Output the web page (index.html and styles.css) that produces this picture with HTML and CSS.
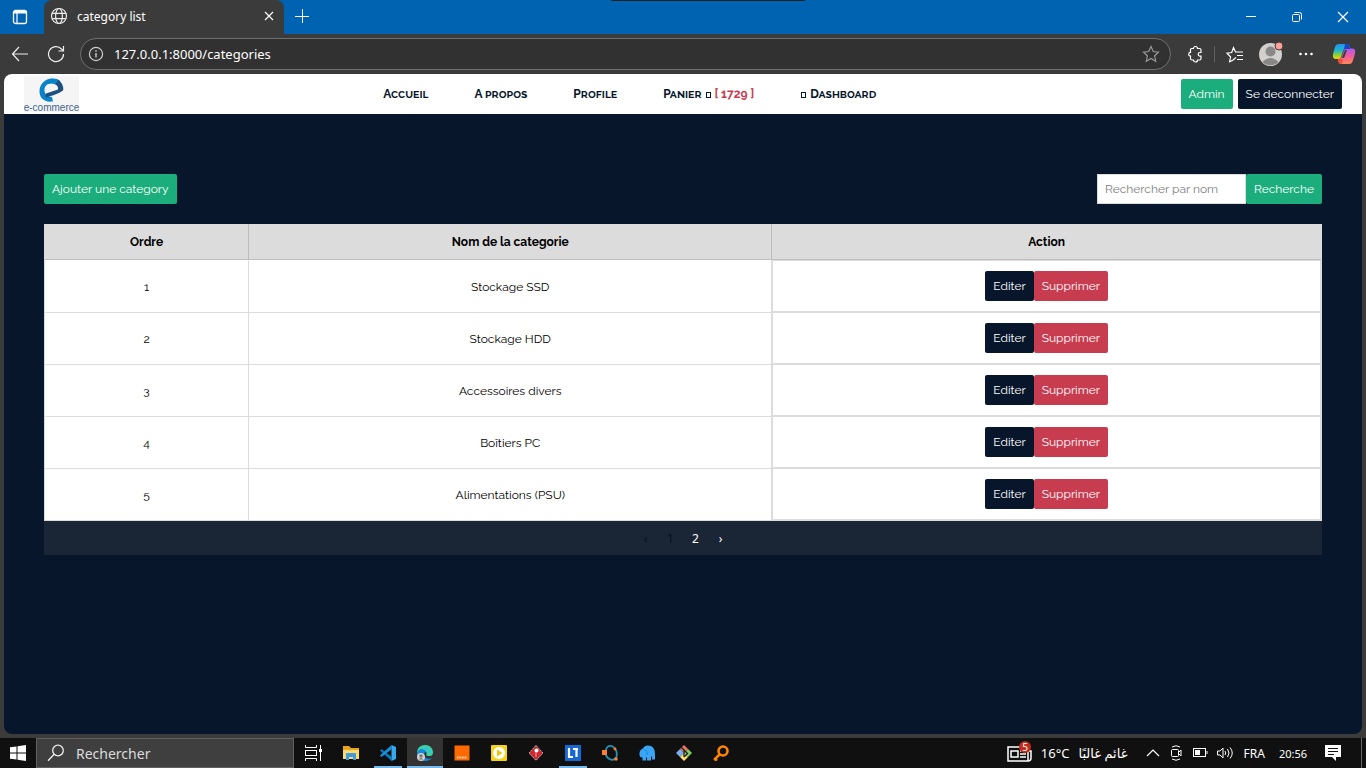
FILE: index.html
```html
<!DOCTYPE html>
<html lang="fr">
<head>
<meta charset="utf-8">
<meta name="viewport" content="width=device-width, initial-scale=1">
<title>category list</title>
<link rel="stylesheet" href="styles.css">
</head>
<body>
<header class="titlebar">
  <button class="tab-actions" aria-label="Tab actions">
    <svg width="16" height="16" viewBox="0 0 16 16" fill="none" stroke="#fff"><rect x="1.5" y="1.5" width="13" height="13" rx="2" stroke-width="1.3"/><path d="M2 3h12" stroke-width="3"/><path d="M5 4v10" stroke-width="1.2"/></svg>
  </button>
  <div class="tab">
    <svg width="18" height="18" viewBox="0 0 18 18" fill="none" stroke="#eee" stroke-width="1.2"><circle cx="9" cy="9" r="7.5"/><ellipse cx="9" cy="9" rx="3.4" ry="7.5"/><path d="M2.2 6.3h13.6M2.2 11.7h13.6"/></svg>
    <span class="tab-title">category list</span>
    <button class="tab-close" aria-label="Close tab"><svg width="10" height="10" viewBox="0 0 10 10" stroke="#fff" stroke-width="1.2"><path d="M1 1l8 8M9 1l-8 8"/></svg></button>
  </div>
  <button class="new-tab" aria-label="New tab"><svg width="14" height="14" viewBox="0 0 14 14" stroke="#fff"><path d="M7.5 0v14M0 7.5h14"/></svg></button>
  <div class="drag-handle"></div>
  <div class="window-buttons">
    <button aria-label="Minimize"><svg width="12" height="12" viewBox="0 0 12 12" stroke="#fff"><path d="M1 5.5h10"/></svg></button>
    <button aria-label="Restore"><svg width="12" height="12" viewBox="0 0 12 12" stroke="#fff" fill="none"><rect x="1.5" y="3.5" width="7" height="7" rx="1"/><path d="M3.5 1.5h5q2 0 2 2v5"/></svg></button>
    <button aria-label="Close window"><svg width="12" height="12" viewBox="0 0 12 12" stroke="#fff" stroke-width="1.2"><path d="M1 1l10 10M11 1l-10 10"/></svg></button>
  </div>
</header>

<div class="toolbar">
  <button class="nav-button" aria-label="Back"><svg width="18" height="16" viewBox="0 0 18 16" fill="none" stroke="#eee" stroke-width="1.2"><path d="M8 1L1.500 8L8 15M1.500 8H17"/></svg></button>
  <button class="nav-button" aria-label="Reload"><svg width="18" height="18" viewBox="0 0 18 18" fill="none" stroke="#eee" stroke-width="1.2"><path d="M16.500 9a7.500 7.500 0 1 1-2-5l2 2M16.500 1v5h-5"/></svg></button>
  <div class="address">
    <svg width="16" height="16" viewBox="0 0 16 16" fill="none" stroke="#ccc" stroke-width="1.2"><circle cx="8" cy="8" r="6.600"/><path d="M8 7v4.500M8 4.300v1.500" stroke-width="1.400"/></svg>
    <input class="address-input" aria-label="Address" value="127.0.0.1:8000/categories">
    <button aria-label="Add to favorites"><svg width="18" height="18" viewBox="0 0 18 18" fill="none" stroke="#999" stroke-width="1.2"><path d="M9 1.500l2.300 5 5.200.6-3.900 3.700 1.100 5.400L9 13.500l-4.700 2.700 1.100-5.400L1.500 7.100l5.200-.6z"/></svg></button>
  </div>
  <button class="ext" aria-label="Extensions"><svg width="16" height="18" viewBox="0 0 16 18" fill="none" stroke="#fff" stroke-width="1.2"><path d="M3.500 4.500q0-1 1-1H6.500a2 2 0 0 1 4 0H12.500q1.500 0 1.500 1.500V7.500h-1a1.800 1.800 0 0 0 0 3.600h1V13.500q0 1.500-1.500 1.500H10.500a2 2 0 0 1-4 0H5q-1.500 0-1.500-1.500V11a1.800 1.800 0 0 1 0-3.600z"/></svg></button>
  <span class="divider"></span>
  <button aria-label="Favorites"><svg width="18" height="18" viewBox="0 0 18 18" fill="none" stroke="#fff" stroke-width="1.2"><path d="M10 12.500l-3.200 2.700-3.200 1.500 1-4.700L1 8.200l4.700-.7L7.500 2.500l2 4.500H17M11 10.500h6M11 14.500h6"/></svg></button>
  <button class="profile" aria-label="Profile"><svg width="26" height="26" viewBox="0 0 26 26"><circle cx="12.500" cy="13.500" r="11.500" fill="#d2d0ce"/><circle cx="12.500" cy="10.500" r="5" fill="#8a8886"/><path d="M4.500 21q8-8 16 0a11.500 11.500 0 0 1-16 0z" fill="#8a8886"/><circle cx="21" cy="5" r="4" fill="#ff9f98" stroke="#3b3b3b"/></svg></button>
  <button aria-label="Settings"><svg width="16" height="6" viewBox="0 0 16 6" fill="#fff"><circle cx="2.500" cy="3" r="1.300"/><circle cx="8" cy="3" r="1.300"/><circle cx="13.500" cy="3" r="1.300"/></svg></button>
  <button class="copilot" aria-label="Copilot"><svg width="24" height="22" viewBox="0 0 24 22">
    <defs>
      <linearGradient id="cool" x1="0" y1="0" x2="0" y2="1"><stop offset="0" stop-color="#2494ef"/><stop offset=".4" stop-color="#19b5d5"/><stop offset=".75" stop-color="#8fd32f"/><stop offset="1" stop-color="#ffd000"/></linearGradient>
      <linearGradient id="warm" x1="0" y1="0" x2="0" y2="1"><stop offset="0" stop-color="#a85cf5"/><stop offset=".5" stop-color="#f25b9c"/><stop offset="1" stop-color="#ff8a55"/></linearGradient>
    </defs>
    <path d="M7 1h8q2 0 2.500 2L18 6h-5q-1.500 0-2 2l-2 6q-.6 2-2.500 2H4q-4 0-3-5l2-7q1-3 4-3z" fill="url(#cool)"/>
    <path d="M17 21H9q-2 0-2.500-2L6 16q3 0 3.700-2l2.400-7q.5-1.500 2-1.500H20q4 0 3 5l-2 7q-1 3.500-4 3.500z" fill="url(#warm)"/>
    <path d="M13 1h2q2 0 2.500 2L18 6h-6z" fill="#1746c8"/><path d="M6 16h5l-1 5q-2.500 0-3.500-2z" fill="#f44b42"/>
    <path d="M13 7h2l-3 8h-2z" fill="#3b3b3b"/></svg></button>
</div>

<main class="page">
  <nav class="site-nav">
    <a class="logo" href="#" aria-label="e-commerce">
      <svg width="55" height="36" viewBox="0 0 55 36"><rect width="55" height="36" fill="#f5f5f5"/>
        <path d="M29 25.300C21 27 15 22 15.500 14.500C16 7 22 2.500 28.500 2.500L30 7.500C25 6.500 21 9 20.500 13C20 18 23 20.500 28 21z" fill="#0b83cb"/>
        <path d="M25 3Q32 1.500 36.500 5L32.500 9Q29 6.500 24 8z" fill="#0b83cb"/>
        <path d="M34 4Q39.500 7 39.300 14Q38 16 30 19L22 21.500Q20.500 19 22 17.500L34 13.500Q34.500 10 31.500 8.500z" fill="#214f80"/>
        <text x="27.500" y="35" text-anchor="middle" class="logo-text">e-commerce</text></svg>
    </a>
    <div class="nav-links">
      <a href="#">Accueil</a>
      <a href="#">A propos</a>
      <a href="#">Profile</a>
      <a href="#">Panier <i class="glyph-box"></i> <span class="total">[ 1729 ]</span></a>
      <a href="#"><i class="glyph-box"></i> Dashboard</a>
    </div>
    <div class="account">
      <button class="btn btn-green">Admin</button>
      <button class="btn btn-navy">Se deconnecter</button>
    </div>
  </nav>

  <section class="content">
    <div class="actions-bar">
      <a class="btn btn-green" href="#">Ajouter une category</a>
      <form class="search">
        <input class="search-input" type="text" placeholder="Rechercher par nom" aria-label="Rechercher par nom">
        <button class="btn btn-green" type="button">Recherche</button>
      </form>
    </div>
    <table class="categories">
      <thead><tr><th class="col-order">Ordre</th><th class="col-name">Nom de la categorie</th><th>Action</th></tr></thead>
      <tbody>
        <tr><td>1</td><td>Stockage SSD</td><td class="action-cell"><div class="row-actions"><button class="btn btn-navy">Editer</button><button class="btn btn-red">Supprimer</button></div></td></tr>
        <tr><td>2</td><td>Stockage HDD</td><td class="action-cell"><div class="row-actions"><button class="btn btn-navy">Editer</button><button class="btn btn-red">Supprimer</button></div></td></tr>
        <tr><td>3</td><td>Accessoires divers</td><td class="action-cell"><div class="row-actions"><button class="btn btn-navy">Editer</button><button class="btn btn-red">Supprimer</button></div></td></tr>
        <tr><td>4</td><td>Boîtiers PC</td><td class="action-cell"><div class="row-actions"><button class="btn btn-navy">Editer</button><button class="btn btn-red">Supprimer</button></div></td></tr>
        <tr><td>5</td><td>Alimentations (PSU)</td><td class="action-cell"><div class="row-actions"><button class="btn btn-navy">Editer</button><button class="btn btn-red">Supprimer</button></div></td></tr>
      </tbody>
    </table>
    <div class="pagination">
      <span class="disabled">‹</span><span class="disabled">1</span><a href="#">2</a><a href="#">›</a>
    </div>
  </section>
</main>

<footer class="taskbar">
  <button class="start" aria-label="Start"><svg width="16" height="16" viewBox="0 0 16 16" fill="#fff"><path d="M0 2.300L6.500 1.400V7.500H0zM7.500 1.200L16 0V7.500H7.500zM0 8.500H6.500V14.600L0 13.700zM7.500 8.500H16V16L7.500 14.800z"/></svg></button>
  <label class="task-search">
    <svg width="18" height="18" viewBox="0 0 18 18" fill="none" stroke="#eee" stroke-width="1.300"><circle cx="11" cy="6.500" r="5.300"/><path d="M7.200 10.300L1 16.800"/></svg>
    <input type="text" placeholder="Rechercher" aria-label="Rechercher">
  </label>
  <div class="apps">
    <button aria-label="Task view"><svg width="18" height="16" viewBox="0 0 18 16" fill="none" stroke="#fff"><path d="M.5 0v2.500h11V0M.5 16v-2.500h11V16M15.500 0v16"/><rect x=".5" y="5.500" width="11" height="5"/><rect x="14" y="4" width="3" height="3" fill="#fff" stroke="none"/></svg></button>
    <button aria-label="File explorer"><svg width="16" height="16" viewBox="0 0 16 16"><path d="M0 1h6l2 2h8v11H0z" fill="#e8a41c"/><path d="M0 5h16v9H0z" fill="#ffd96b"/><path d="M3 8h10v7h-3v-3H6v3H3z" fill="#3e9be0"/></svg></button>
    <button class="open" aria-label="Visual Studio Code"><svg width="16" height="16" viewBox="0 0 16 16"><path d="M11.500 0v16L0 5.500 1.500 4l10 7.700z" fill="#0879bf"/><path d="M11.500 0v4.300L1.500 12 0 10.500z" fill="#1692da"/><path d="M11.500 0L16 2v12l-4.500 2z" fill="#35a9ef"/></svg></button>
    <button class="open active" aria-label="Microsoft Edge"><svg width="18" height="18" viewBox="0 0 18 18"><path d="M1 9C1 3.500 5 1 9.500 1C14.500 1 17 5 17 8.500c0 3-2.500 4-5 3.500-3-.6-1-2-1.500-3.500C9 4.500 3 5 1 9z" fill="#3bd0a5"/><path d="M1 9C2 5 8 3 10.500 8 7 8 7 13 11 14.500c2 .7 4 0 5.500-1C13 19 1 18.500 1 9z" fill="#148bd8"/><path d="M6 5Q13 1 16 9l-5-1Q9 5 6 5z" fill="#37c6ce"/><circle cx="5" cy="13" r="4" fill="#d2d0ce"/><circle cx="5" cy="12" r="1.700" fill="#777"/><path d="M2.500 15.500q2.500-3 5 0z" fill="#777"/></svg></button>
    <button aria-label="Orange"><svg width="16" height="16" viewBox="0 0 16 16"><rect x=".5" y=".5" width="15" height="15" fill="#ff6a00"/><path d="M3 12.500h10" stroke="#ffe0c8" stroke-width="2" stroke-dasharray="1 .6"/></svg></button>
    <button aria-label="Media player"><svg width="16" height="16" viewBox="0 0 16 16"><rect width="16" height="16" rx="1" fill="#f4d415"/><circle cx="8" cy="8" r="6" fill="#fff"/><path d="M6 4.500L11.500 8 6 11.500z" fill="#e8c70d"/></svg></button>
    <button aria-label="Git client"><svg width="16" height="16" viewBox="0 0 16 16"><path d="M8 .5L15 8 8 15.500 1 8z" fill="#cf2730" stroke="#bbb" stroke-dasharray="2 1"/><circle cx="8.500" cy="5.500" r="2" fill="#fff"/><path d="M8 7v5" stroke="#e8a0a4"/></svg></button>
    <button class="open" aria-label="Lightshot"><svg width="16" height="16" viewBox="0 0 16 16"><rect width="16" height="16" fill="#1767d2"/><path d="M4 3v9h4M8 4h5M11.500 4v8" fill="none" stroke="#fff" stroke-width="2.200"/></svg></button>
    <button aria-label="Octave"><svg width="16" height="16" viewBox="0 0 16 16"><path d="M4 5Q5 0 10 1.200Q16 4 14.500 12Q11 17 6 13Q2 9 4 5z" fill="none" stroke="#2692b5" stroke-width="1.800"/><rect x="0" y="5" width="5" height="5" fill="#ff7d32"/><circle cx="13" cy="4" r="1.400" fill="#ff7d32"/><circle cx="14" cy="14" r="1.800" fill="#ff7d32"/></svg></button>
    <button aria-label="MAMP"><svg width="16" height="16" viewBox="0 0 16 16"><path d="M.5 10Q0 5 4 3.500Q6-1 12 1Q16 3 16 9V14.500h-3v-3h-1v4H8v-3H7v3H3.500V12.500Q1 13 .5 10z" fill="#38a5f5"/><path d="M5 5q4 .5 3 5" fill="none" stroke="#1f86dc"/></svg></button>
    <button aria-label="Git"><svg width="16" height="16" viewBox="0 0 16 16"><path d="M8 0l4 4-4 4-4-4z" fill="#ef735f"/><path d="M4 4l4 4-4 4-4-4z" fill="#79aef2"/><path d="M12 4l4 4-4 4-4-4z" fill="#83cd62"/><path d="M8 8l4 4-4 4-4-4z" fill="#ffe071"/><path d="M5 2l6 6M8 5v7M8 12l4-4" stroke="#222" stroke-width="1.300" fill="none"/></svg></button>
    <button aria-label="Search tool"><svg width="16" height="16" viewBox="0 0 16 16" fill="none" stroke="#ff8400"><circle cx="10" cy="6" r="4.500" stroke-width="2.600"/><path d="M7 9l-6 6M2 14l2 1.500" stroke-width="2.500"/></svg></button>
  </div>
  <div class="tray">
    <button class="weather"><svg width="25" height="24" viewBox="0 0 25 24"><path d="M1 6h20v14H1zM21 10h3v7q0 3-3 3" fill="none" stroke="#fff" stroke-width="1.500"/><rect x="4" y="10" width="7" height="6" fill="none" stroke="#fff" stroke-width="1.500"/><path d="M13 10h6M13 13h6M13 16h6" stroke="#fff" stroke-width="1.300"/><circle cx="18" cy="6" r="6" fill="#c42b1c"/><text x="18" y="10" text-anchor="middle" class="badge-text">5</text></svg><span>16°C</span><span lang="ar" dir="rtl">غائم غالبًا</span></button>
    <div class="tray-icons">
      <svg width="14" height="14" viewBox="0 0 14 14" fill="none" stroke="#fff" stroke-width="1.200"><path d="M1 10l6-6 6 6"/></svg>
      <svg width="14" height="16" viewBox="0 0 14 16" fill="none" stroke="#fff"><rect x="2.500" y="4.500" width="7" height="7" rx="1"/><path d="M10 7l2-2v6l-2-2M3 2q4-2.500 8 0M3 14q4 2.500 8 0"/></svg>
      <svg width="16" height="14" viewBox="0 0 16 14" fill="none" stroke="#fff"><rect x="1.500" y="2.500" width="12" height="8"/><path d="M15 5v3"/><path d="M3 4h5v5H3z" fill="#fff" stroke="none"/></svg>
      <svg width="17" height="16" viewBox="0 0 17 16" fill="none" stroke="#fff"><path d="M.5 6h2.500l3-3v10l-3-3H.500zM8 6q1.500 2 0 4M10.500 4q3 4 0 8M13 2.500q4.500 5.500 0 11"/></svg>
    </div>
    <span>FRA</span>
    <time>20:56</time>
    <button class="notify" aria-label="Notifications"><svg width="16" height="16" viewBox="0 0 16 16"><path d="M0 0h16v12H11v4L7 12H0z" fill="#fff"/><path d="M3 3.500h10M3 6.500h10M3 9.500h6" stroke="#111"/></svg></button>
  </div>
</footer>
</body>
</html>
```

FILE: styles.css
```css
* { box-sizing: border-box; }

body {
  margin: 0;
  min-height: 100vh;
  display: flex;
  flex-direction: column;
  background: #3b3b3b;
  font-family: "Noto Sans", "DejaVu Sans", sans-serif;
  font-size: 12px;
  color: #fff;
}

button, input { font: inherit; color: inherit; }
button { border: 0; padding: 0; background: none; }
svg { display: block; flex: none; }
a { color: inherit; text-decoration: none; }

/* Browser window */
.titlebar {
  position: relative;
  display: flex;
  height: 34px;
  background: #0063b1;
}
.tab-actions, .new-tab { display: grid; place-items: center; }
.tab-actions { width: 44px; padding-right: 4px; }
.new-tab { width: 35px; padding-bottom: 2px; }
.tab {
  display: flex;
  align-items: center;
  gap: 9px;
  width: 240px;
  padding: 0 10px 2px 6px;
  background: #3b3b3b;
  border-radius: 8px 8px 0 0;
}
.tab-title { flex: 1; }
.drag-handle {
  position: absolute;
  top: 0;
  left: 50%;
  width: 194px;
  height: 1px;
  transform: translateX(-37%);
  background: #222;
}
.window-buttons { display: flex; margin-left: auto; }
.window-buttons button { display: grid; place-items: center; width: 46px; }

.toolbar {
  display: flex;
  align-items: center;
  gap: 14px;
  height: 40px;
  padding: 0 10px;
}
.nav-button { width: 20px; margin-right: 2px; display: grid; place-items: center; }
.address {
  flex: 1;
  display: flex;
  align-items: center;
  gap: 10px;
  height: 32px;
  padding: 0 10px 0 7px;
  margin-left: -2px;
  margin-right: 2px;
  border: 1px solid #707070;
  border-radius: 16px;
  background: #313131;
}
.address-input {
  flex: 1;
  min-width: 0;
  padding: 0;
  border: 0;
  background: none;
  font-size: 13px;
}
.divider { width: 1px; height: 16px; margin: 0 -3px; background: #606060; }
.copilot { margin-left: 4px; }

/* Site */
.page {
  flex: 1;
  margin: 0 4px 4px;
  border-radius: 8px;
  overflow: hidden;
  background: #07162b;
  color: #000;
  font-family: Raleway, Lato, sans-serif;
  font-size: 12px;
}
.site-nav {
  display: flex;
  align-items: center;
  justify-content: space-between;
  height: 40px;
  padding: 0 20px;
  background: #fff;
}
.logo-text { font: 10px "Liberation Sans", sans-serif; fill: #41658f; }
.nav-links {
  display: flex;
  gap: 46px;
  font-weight: 700;
  font-variant-caps: small-caps;
  color: #07162b;
}
.glyph-box {
  display: inline-block;
  width: 5px;
  height: 6px;
  margin: 0 1px;
  border: 1px solid #07162b;
}
.total { color: #c83c50; }
.account { display: flex; gap: 5px; }

.btn {
  display: flex;
  align-items: center;
  height: 30px;
  padding: 0 8px;
  border-radius: 2px;
  color: #fff;
}
.btn-green { background: #1bad7b; }
.btn-navy { background: #07162b; }
.btn-red { background: #c83c50; }

.content { padding: 60px 40px; }
.actions-bar { display: flex; justify-content: space-between; margin-bottom: 20px; }
.search { display: flex; }
.search-input {
  width: 149px;
  height: 30px;
  padding: 0 7px;
  border: 1px solid #dcdcdc;
  background: #fff;
  color: #000;
}
.search-input::placeholder { color: #808080; opacity: 1; }

.categories {
  width: 100%;
  table-layout: fixed;
  border-collapse: separate;
  border-spacing: 0;
  border: 1px solid #dcdcdc;
  border-top: 0;
  background: #fff;
  text-align: center;
}
.col-order { width: 16%; }
.col-name { width: 41%; }
.categories th {
  height: 36px;
  padding: 0;
  background: #dcdcdc;
  border-right: 1px solid #bdbdbd;
  border-bottom: 1px solid #bdbdbd;
}
.categories td {
  height: 52px;
  padding: 0;
  border-top: 1px solid #dcdcdc;
  border-right: 1px solid #dcdcdc;
}
.categories tr:first-child td:not(.action-cell) { border-top-color: #fff; }
.categories th:last-child, .categories td:last-child { border-right: 0; }
.row-actions {
  display: flex;
  align-items: center;
  justify-content: center;
  height: 51px;
  border: 1px solid #dcdcdc;
  border-top: 0;
}

.pagination {
  display: flex;
  align-items: center;
  justify-content: center;
  height: 34px;
  background: #1a2535;
  color: #fff;
  font-family: "Noto Sans", sans-serif;
}
.pagination > * { width: 25px; text-align: center; }
.pagination .disabled { color: #07101c; }

/* Taskbar */
.taskbar { display: flex; height: 30px; background: #101010; }
.start { width: 36px; display: grid; place-items: center; }
.task-search {
  display: flex;
  align-items: center;
  gap: 11px;
  width: 258px;
  padding: 0 10px;
  border: 1px solid #606060;
  background: #3f3f3f;
  font-size: 14px;
}
.task-search input { flex: 1; min-width: 0; padding: 0; border: 0; background: none; }
.task-search input::placeholder { color: #dadada; opacity: 1; }
.apps { display: flex; gap: 1px; padding-left: 2px; }
.apps button { display: grid; place-items: center; width: 36px; }
.apps .open {
  background: linear-gradient(#76b9ed, #76b9ed) center bottom / 28px 2px no-repeat;
}
.apps .active { background-color: #333; background-size: 36px 2px; }
.tray {
  display: flex;
  align-items: center;
  gap: 14px;
  margin-left: auto;
  margin-right: 4px;
  padding-right: 20px;
  border-right: 1px solid #666;
}
.weather { display: flex; align-items: center; gap: 9px; font-size: 13px; margin-right: 4px; }
.badge-text { font: 10px "Noto Sans", sans-serif; fill: #fff; }
.tray-icons { display: flex; align-items: center; gap: 9px; margin-right: -4px; }
.tray time { font-size: 11px; }
.notify { margin-left: 4px; }
```
